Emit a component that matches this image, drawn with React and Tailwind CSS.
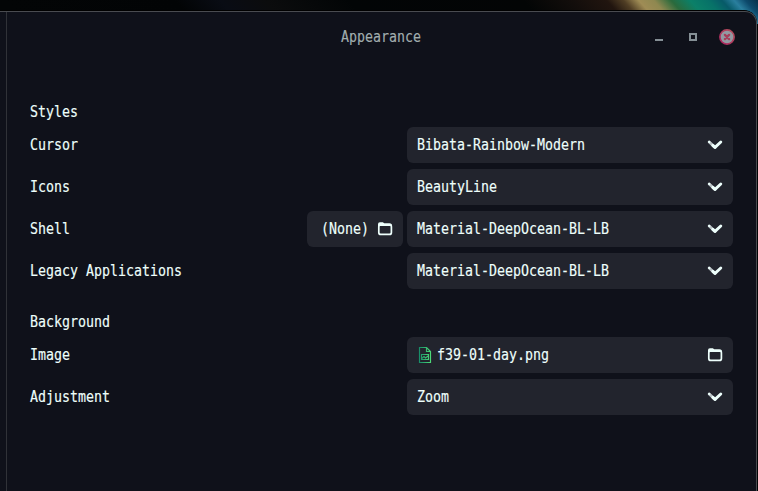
import React from "react";

function Mono({ children, className = "" }) {
  return (
    <span className={`block h-5 shrink-0 ${className}`} style={{ width: children.length * 8 }}>
      <span className="block w-max origin-left scale-x-[0.886] whitespace-pre text-[15px] leading-5 [-webkit-text-stroke:0.15px_currentColor]">{children}</span>
    </span>
  );
}

function Chevron() {
  return (
    <svg width="16" height="16" viewBox="0 0 16 16" fill="none" strokeWidth="2.9" strokeLinecap="round" strokeLinejoin="round">
      <path d="M2.2 5 8 10.4" stroke="#b9c1c4" />
      <path d="M5.8 8.4 8 10.4 13.8 5" stroke="#eefffc" />
      <path d="M2.2 5h.01" stroke="#eefffc" strokeWidth="2.3" />
    </svg>
  );
}

function Folder() {
  return (
    <svg width="16" height="16" viewBox="0 0 16 16" fill="none">
      <path d="M1 5V3.2Q1 1.3 2.9 1.3H5.8L7.3 2.2H12.5Q15.1 2.2 15.1 5H1Z" fill="#eefffc" />
      <rect x="1.8" y="3.8" width="12.6" height="9.6" rx="2" stroke="#eefffc" strokeWidth="1.7" />
    </svg>
  );
}

function ImageFile() {
  return (
    <svg width="16" height="16" viewBox="0 0 16 16" fill="none" stroke="url(#leaf)" strokeWidth="1.15">
      <defs>
        <linearGradient id="leaf" x1="2" y1="0" x2="14" y2="0" gradientUnits="userSpaceOnUse">
          <stop stopColor="#168b68" />
          <stop offset="1" stopColor="#4edc79" />
        </linearGradient>
      </defs>
      <path d="M2.5.5H9.5L13.5 4.5V15.5H2.5Z M9.5.5V4.5H13.5" />
      <path d="M4.5 7.5H11.5V12.5H4.5Z M5 11.2 7 9.5 8.5 11 11 9" />
    </svg>
  );
}

function Field({ children, icon }) {
  return (
    <div className="flex h-9 w-[326px] items-center justify-between rounded-md bg-[#22242d] px-2.5">
      <div className="flex items-center">{children}</div>
      {icon}
    </div>
  );
}

function Row({ label, children }) {
  return (
    <div className="flex h-9 items-center justify-between">
      <Mono>{label}</Mono>
      <div className="flex gap-1">{children}</div>
    </div>
  );
}

function Select({ label, value }) {
  return (
    <Row label={label}>
      <Field icon={<Chevron />}><Mono>{value}</Mono></Field>
    </Row>
  );
}

export default function App() {
  return (
    <div className="relative h-[491px] w-[758px] overflow-hidden bg-[#020405] pt-2.5 pr-px font-['DejaVu_Sans_Mono',monospace] text-[#eefffc]">
      <svg className="absolute top-0 left-0" width="758" height="24">
        <defs>
          <linearGradient id="wall" x1="0" x2="758" y1="0" y2="0" gradientUnits="userSpaceOnUse" gradientTransform="skewX(42)">
            <stop offset="0" stopColor="#030506" />
            <stop offset=".23" stopColor="#020405" />
            <stop offset=".29" stopColor="#090c14" />
            <stop offset=".35" stopColor="#0b0c0d" />
            <stop offset=".46" stopColor="#020506" />
            <stop offset=".69" stopColor="#030505" />
            <stop offset=".75" stopColor="#120d0b" />
            <stop offset=".80" stopColor="#21150f" />
            <stop offset=".822" stopColor="#4f3d24" />
            <stop offset=".842" stopColor="#9f8c55" />
            <stop offset=".862" stopColor="#8f8850" />
            <stop offset=".885" stopColor="#2a6a3c" />
            <stop offset=".91" stopColor="#0b8068" />
            <stop offset=".934" stopColor="#077268" />
            <stop offset=".952" stopColor="#075a68" />
            <stop offset=".968" stopColor="#2a7f9e" />
            <stop offset=".983" stopColor="#0d4a6c" />
            <stop offset="1" stopColor="#073049" />
          </linearGradient>
        </defs>
        <rect width="758" height="24" fill="url(#wall)" />
      </svg>
      <main className="relative flex h-[481px] w-[757px] rounded-tr-[13px] border-t border-t-black bg-black">
        <div className="flex h-full w-full rounded-tr-xl border-t border-r border-[#494b50] bg-[#0f111a]">
          <div className="w-[7px] shrink-0 border-r border-[#303238]" />
          <div className="min-w-0 flex-1">
            <header className="flex h-[50px] items-center pr-[21px]">
              <div className="w-[334px] shrink-0" />
              <Mono className="text-[#a1adae]">Appearance</Mono>
              <div className="ml-auto flex items-center gap-[18px]">
                <svg width="16" height="16"><path d="M4 10h8v2H4z" fill="#858f95" /></svg>
                <svg width="16" height="16"><path d="M5 5h6v6H5z" fill="none" stroke="#858f95" strokeWidth="2" /></svg>
                <svg width="16" height="16" viewBox="0 0 16 16">
                  <defs>
                    <linearGradient id="close" x1="0" y1="1" x2="1" y2="0">
                      <stop stopColor="#ad235f" />
                      <stop offset="1" stopColor="#b4515c" />
                    </linearGradient>
                  </defs>
                  <circle cx="8" cy="8" r="7.1" fill="#929aa2" stroke="url(#close)" strokeWidth="1.7" />
                  <path d="m5.9 5.9 4.2 4.2m0-4.2-4.2 4.2" stroke="#a63f5b" strokeWidth="2.3" strokeLinecap="round" />
                </svg>
              </div>
            </header>
            <section className="px-[23px] pt-10">
              <Mono>Styles</Mono>
              <div className="mt-[5px] flex flex-col gap-1.5">
                <Select label="Cursor" value="Bibata-Rainbow-Modern" />
                <Select label="Icons" value="BeautyLine" />
                <Row label="Shell">
                  <div className="flex h-9 w-24 items-center gap-2 rounded-md bg-[#22242d] pl-3.5">
                    <Mono>(None)</Mono>
                    <Folder />
                  </div>
                  <Field icon={<Chevron />}><Mono>Material-DeepOcean-BL-LB</Mono></Field>
                </Row>
                <Select label="Legacy Applications" value="Material-DeepOcean-BL-LB" />
              </div>
              <Mono className="mt-[23px]">Background</Mono>
              <div className="mt-[5px] flex flex-col gap-1.5">
                <Row label="Image">
                  <Field icon={<Folder />}>
                    <span className="mr-1"><ImageFile /></span>
                    <Mono>f39-01-day.png</Mono>
                  </Field>
                </Row>
                <Select label="Adjustment" value="Zoom" />
              </div>
            </section>
          </div>
        </div>
      </main>
    </div>
  );
}
